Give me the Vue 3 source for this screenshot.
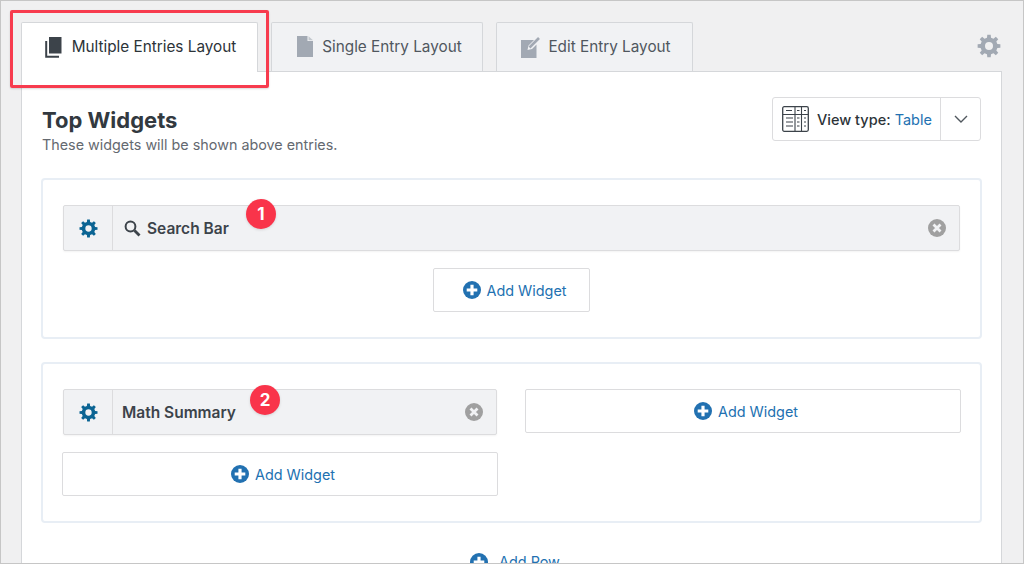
<script setup>
const tabs = [
  { id: "multiple", label: "Multiple Entries Layout", active: true },
  { id: "single", label: "Single Entry Layout", active: false },
  { id: "edit", label: "Edit Entry Layout", active: false },
];

// builds an 8 tooth gear around 12,12 (hole cut with evenodd)
const gearPath = (() => {
  const teeth = 8;
  const outer = 11.5;
  const root = 8.6;
  const hole = 4;
  const pts = [];
  for (let i = 0; i < teeth; i++) {
    const a = (i * Math.PI * 2) / teeth - Math.PI / 2;
    const step = (Math.PI * 2) / teeth;
    [
      [root, a - step * 0.3],
      [outer, a - step * 0.19],
      [outer, a + step * 0.19],
      [root, a + step * 0.3],
    ].forEach(([r, t]) => {
      pts.push(`${(12 + r * Math.cos(t)).toFixed(2)} ${(12 + r * Math.sin(t)).toFixed(2)}`);
    });
  }
  return `M${pts.join("L")}Z M${12 - hole} 12a${hole} ${hole} 0 1 0 ${hole * 2} 0a${hole} ${hole} 0 1 0 ${-hole * 2} 0Z`;
})();
</script>

<template>
  <div class="frame">
    <div class="tabs">
      <a v-for="tab in tabs" :key="tab.id" class="tab" :class="[tab.id, { active: tab.active }]">
        <svg v-if="tab.id === 'multiple'" class="tab-icon" width="18" height="22" viewBox="0 0 18 22">
          <path d="M4 1h12.500v16.500H4z" fill="#3c434a" />
          <path d="M1.200 5v15.800H14" fill="none" stroke="#3c434a" stroke-width="2" />
        </svg>
        <svg v-else-if="tab.id === 'single'" class="tab-icon" width="16" height="21" viewBox="0 0 16 21">
          <path d="M0 0h10.500v5H16v16H0z" fill="#a2a9b3" />
          <path d="M11.500 0.200 16 4.200h-4.500z" fill="#c3c8ce" />
        </svg>
        <svg v-else class="tab-icon" width="20" height="22" viewBox="0 0 20 22">
          <path d="M0 4h13L7.500 9.500 6.500 14l4.500-1 4.500-4.500V22H0z" fill="#a2a9b3" />
          <path d="M8.500 11.500 18 2" stroke="#a2a9b3" stroke-width="2.600" />
        </svg>
        {{ tab.label }}
      </a>
      <svg class="settings" width="24" height="24" viewBox="0 0 24 24">
        <path :d="gearPath" fill="#a2a9b3" fill-rule="evenodd" />
      </svg>
    </div>

    <div class="panel">
      <div class="head">
        <div class="title">
          <h2>Top Widgets</h2>
          <p>These widgets will be shown above entries.</p>
        </div>
        <div class="view-type">
          <div class="view-label">
            <svg width="27" height="26" viewBox="0 0 27 26" fill="none" stroke="#3c434a">
              <rect x="0.700" y="0.700" width="25.600" height="24.600" rx="1.500" stroke-width="1.300" />
              <path d="M1 8.500h25M13 1v24.500M19.500 1v24.500" stroke-width="1.100" />
              <path d="M4 4.500h6M15 4.500h2.500M22 4.500h2M4 12h7M4 16h7M4 20h7M15 12h2.500M15 16h2.500M15 20h2.500M22 12h2M22 16h2M22 20h2" stroke-width="1.200" />
            </svg>
            <span><b>View type:</b> <em>Table</em></span>
          </div>
          <div class="view-toggle">
            <svg width="14" height="8" viewBox="0 0 14 8" fill="none">
              <path d="M1 1l6 6 6-6" stroke="#50575e" stroke-width="1.400" />
            </svg>
          </div>
        </div>
      </div>

      <section class="card">
        <div class="widget wide">
          <div class="widget-gear">
            <svg width="19" height="19" viewBox="0 0 24 24"><path :d="gearPath" fill="#0b6493" fill-rule="evenodd" /></svg>
          </div>
          <div class="widget-name">
            <svg width="17" height="17" viewBox="0 0 17 17" fill="none" stroke="#3c434a">
              <circle cx="6.500" cy="6.500" r="4.900" stroke-width="2" />
              <path d="M10.500 10.500l5 5" stroke-width="2.800" />
            </svg>
            Search Bar
          </div>
          <svg class="remove" width="18" height="18" viewBox="0 0 18 18">
            <circle cx="9" cy="9" r="9" fill="#a0a0a0" />
            <path d="M5.500 5.500l7 7M12.500 5.500l-7 7" stroke="#f1f2f4" stroke-width="2.800" />
          </svg>
          <span class="badge one">1</span>
        </div>
        <div class="center">
          <button class="add small">
            <svg width="18" height="18" viewBox="0 0 17 17"><circle cx="8.500" cy="8.500" r="8.500" fill="#2271b1" /><path d="M8.500 3.500v10M3.500 8.500h10" stroke="#fff" stroke-width="3" /></svg>
            Add Widget
          </button>
        </div>
      </section>

      <section class="card second">
        <div class="column">
          <div class="widget">
            <div class="widget-gear">
              <svg width="19" height="19" viewBox="0 0 24 24"><path :d="gearPath" fill="#0b6493" fill-rule="evenodd" /></svg>
            </div>
            <div class="widget-name plain">Math Summary</div>
            <svg class="remove" width="18" height="18" viewBox="0 0 18 18">
              <circle cx="9" cy="9" r="9" fill="#a0a0a0" />
              <path d="M5.500 5.500l7 7M12.500 5.500l-7 7" stroke="#f1f2f4" stroke-width="2.800" />
            </svg>
            <span class="badge two">2</span>
          </div>
          <button class="add">
            <svg width="18" height="18" viewBox="0 0 17 17"><circle cx="8.500" cy="8.500" r="8.500" fill="#2271b1" /><path d="M8.500 3.500v10M3.500 8.500h10" stroke="#fff" stroke-width="3" /></svg>
            Add Widget
          </button>
        </div>
        <div class="column">
          <button class="add">
            <svg width="18" height="18" viewBox="0 0 17 17"><circle cx="8.500" cy="8.500" r="8.500" fill="#2271b1" /><path d="M8.500 3.500v10M3.500 8.500h10" stroke="#fff" stroke-width="3" /></svg>
            Add Widget
          </button>
        </div>
      </section>

      <div class="add-row">
        <svg width="18" height="18" viewBox="0 0 17 17"><circle cx="8.500" cy="8.500" r="8.500" fill="#2271b1" /><path d="M8.500 3.500v10M3.500 8.500h10" stroke="#fff" stroke-width="3" /></svg>
        Add Row
      </div>
    </div>

    <div class="highlight"></div>
  </div>
</template>

<style scoped>
.frame {
  position: relative;
  box-sizing: border-box;
  height: 564px;
  padding: 21px 20px 0;
  overflow: hidden;
  background: #f0f0f1;
  border: 1px solid #c6c6c6;
  font-family: Inter, "Liberation Sans", sans-serif;
  font-size: 15.3px;
  color: #2c3338;
}

/* tabs */
.tabs {
  display: flex;
  align-items: flex-start;
  gap: 13px;
  height: 49px;
}
.tab {
  box-sizing: border-box;
  display: flex;
  align-items: center;
  justify-content: center;
  gap: 9px;
  height: 49px;
  padding-bottom: 1px;
  background: #f1f2f4;
  border: 1px solid #d5d7da;
  border-bottom: 0;
  border-radius: 2px 2px 0 0;
  color: #50575e;
}
.tab.multiple { width: 237px; padding-left: 2px; }
.tab.single { width: 212px; padding-left: 5px; }
.tab.edit { width: 197px; gap: 7px; padding-left: 3px; }
.tab.active {
  position: relative;
  z-index: 1;
  height: 50px;
  padding-bottom: 2px;
  background: #fff;
  color: #2c3338;
}
.settings {
  margin: 12px 2px 0 auto;
}

/* panel */
.panel {
  box-sizing: border-box;
  width: 981px;
  height: 540px;
  padding: 25px 19px 0;
  background: #fff;
  border: 1px solid #d5d7da;
}
.head {
  display: flex;
  justify-content: space-between;
  align-items: flex-start;
  margin-bottom: 24px;
}
.title {
  padding: 9px 0 0 1px;
}
.title h2 {
  margin: 0;
  font-size: 22px;
  line-height: 28px;
  font-weight: 700;
  color: #32393f;
}
.title p {
  margin: 2px 0 0;
  font-size: 14.35px;
  line-height: 18px;
  color: #646970;
}
.view-type {
  box-sizing: border-box;
  display: flex;
  width: 209px;
  height: 44px;
  margin-right: 1px;
  border: 1px solid #dcdcde;
  border-radius: 3px;
}
.view-label {
  flex: 1;
  display: flex;
  align-items: center;
  gap: 8px;
  padding-left: 9px;
  font-size: 14.5px;
}
.view-label b {
  font-weight: 500;
}
.view-label em {
  font-style: normal;
  color: #2271b1;
}
.view-toggle {
  display: flex;
  align-items: center;
  justify-content: center;
  width: 39px;
  border-left: 1px solid #dcdcde;
}

/* cards */
.card {
  box-sizing: border-box;
  height: 161px;
  margin: 0 0 23px;
  padding: 25px 19px;
  border: 2px solid #e8eef5;
  border-radius: 4px;
}
.card.second {
  display: grid;
  grid-template-columns: 436px 436px;
  gap: 27px;
}
.column {
  display: flex;
  flex-direction: column;
  gap: 17px;
}
.widget {
  position: relative;
  box-sizing: border-box;
  display: flex;
  align-items: center;
  height: 46px;
  margin: 0 1px;
  background: #f1f2f4;
  border: 1px solid #dcdcde;
  border-radius: 2px;
  box-shadow: 0 1px 2px rgba(0, 0, 0, 0.05);
}
.widget.wide {
  margin-bottom: 17px;
}
.widget-gear {
  display: flex;
  align-items: center;
  justify-content: center;
  flex: none;
  width: 48px;
  height: 100%;
  border-right: 1px solid #dcdcde;
}
.widget-name {
  flex: 1;
  display: flex;
  align-items: center;
  gap: 6px;
  padding-left: 11px;
  font-weight: 600;
  font-size: 15.5px;
  color: #3c434a;
}
.widget-name.plain {
  padding-left: 9px;
}
.remove {
  flex: none;
  margin-right: 13px;
}
.badge {
  position: absolute;
  width: 30px;
  height: 30px;
  border-radius: 50%;
  background: #f9344a;
  color: #fff;
  font-weight: 700;
  font-size: 17px;
  line-height: 30px;
  text-align: center;
  box-shadow: 0 1px 3px rgba(0, 0, 0, 0.12);
}
.badge.one {
  left: 182px;
  top: -7px;
}
.badge.two {
  left: 186px;
  top: -5px;
}
.center {
  display: flex;
  justify-content: center;
}
.add {
  box-sizing: border-box;
  display: flex;
  align-items: center;
  justify-content: center;
  gap: 6px;
  width: 100%;
  height: 44px;
  padding: 0 0 0 6px;
  background: #fff;
  border: 1px solid #dcdcde;
  border-radius: 2px;
  font-family: inherit;
  font-size: 14.4px;
  color: #2271b1;
}
.add.small {
  width: 157px;
}
.add-row {
  display: flex;
  align-items: center;
  justify-content: center;
  gap: 11px;
  padding-left: 7px;
  font-size: 14.4px;
  line-height: 18px;
  margin-top: 30px;
  color: #2271b1;
}

/* red marker round the active tab */
.highlight {
  position: absolute;
  z-index: 2;
  left: 9px;
  top: 9px;
  box-sizing: border-box;
  width: 259px;
  height: 78px;
  border: 3px solid #f73b4e;
  border-radius: 2px;
  box-shadow: 0 1px 2px rgba(0, 0, 0, 0.15);
}
</style>

<style>
body {
  background: #fff;
}
</style>
